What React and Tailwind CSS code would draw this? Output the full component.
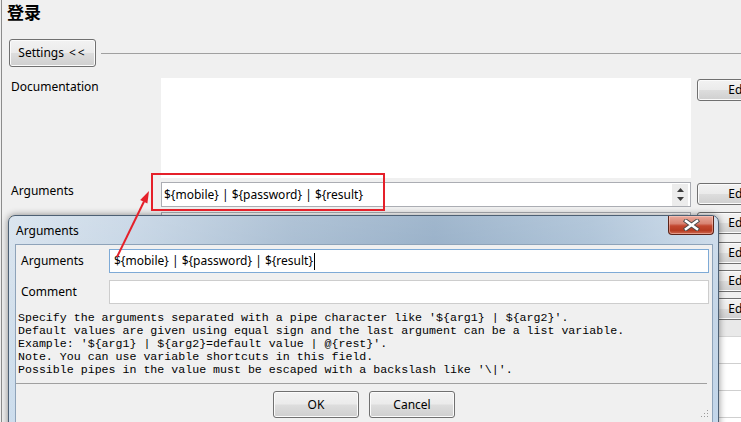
import React from "react";

function WinButton({ className = "", children }) {
  return (
    <div
      className={
        "flex shrink-0 items-center justify-center rounded-[3px] border border-[#707070] bg-[linear-gradient(to_bottom,#f2f2f2_0%,#ebebeb_48%,#dddddd_52%,#cfcfcf_100%)] shadow-[inset_0_0_0_1px_#fbfbfb] text-black " +
        className
      }
    >
      {children}
    </div>
  );
}

function Spinner() {
  return (
    <div className="ml-auto mr-[2px] flex h-[22px] w-[16px] shrink-0 flex-col items-center justify-center gap-[5px] bg-[#ececec]">
      <svg width="7" height="4" viewBox="0 0 7 4">
        <path d="M0 4 L3.5 0 L7 4Z" fill="#3c3c3c" />
      </svg>
      <svg width="7" height="4" viewBox="0 0 7 4">
        <path d="M0 0 L3.5 4 L7 0Z" fill="#3c3c3c" />
      </svg>
    </div>
  );
}

function FieldRow({ label, heightClass, children, buttonTop = "mt-px", buttonH = "h-[22px]" }) {
  return (
    <div className={"flex shrink-0 pl-[9px] " + heightClass}>
      <div className="w-[150px] shrink-0 pt-px">{label}</div>
      <div className="w-[530px] shrink-0">{children}</div>
      <WinButton className={"ml-[6px] w-[84px] " + buttonTop + " " + buttonH}>Edit</WinButton>
    </div>
  );
}

function Dialog() {
  return (
    <div className="absolute left-[8px] top-[215px] h-[222px] w-[711px] rounded-t-[7px] border border-[#4d6074] bg-[linear-gradient(to_bottom,rgba(255,255,255,0.18)_0%,rgba(255,255,255,0)_45%,rgba(190,215,240,0.35)_100%),linear-gradient(to_right,#d3e0ec_0%,#c0d1e2_18%,#9fb6cd_40%,#8ca7c2_60%,#a4bcd3_82%,#c6d7e8_100%)] shadow-[0_0_7px_rgba(0,0,0,0.45)]">
      <div className="relative flex h-[28px] items-center pl-[7px] pt-[2px] text-black">
        <span>Arguments</span>
        <div className="absolute right-[4px] top-0 flex h-[19px] w-[46px] items-center justify-center rounded-b-[4px] border border-t-0 border-[#5b2419] bg-[linear-gradient(to_bottom,#e9aa9c_0%,#d88372_42%,#c2472f_55%,#b63b21_80%,#cf6a52_100%)] shadow-[inset_0_0_0_1px_rgba(255,220,210,0.45)]">
          <svg width="17" height="12" viewBox="0 0 17 12">
            <path d="M3 2 L14 10 M14 2 L3 10" stroke="#4a4a4a" strokeWidth="4.4" strokeLinecap="square" />
            <path d="M3 2 L14 10 M14 2 L3 10" stroke="#ffffff" strokeWidth="2.6" strokeLinecap="square" />
          </svg>
        </div>
      </div>
      <div className="relative ml-[6px] mr-[5px] h-[200px] border border-[#8ea3b9] bg-[#f0f0f0]">
        <div className="mt-[4px] flex h-[24px] items-center pl-[5px] pr-[3px]">
          <div className="w-[88px] shrink-0">Arguments</div>
          <div className="flex h-[24px] flex-1 items-center border border-[#7eaad6] bg-white pl-[4px]">
            <span>{"${mobile} | ${password} | ${result}"}</span>
            <span className="ml-px h-[17px] w-px bg-black" />
          </div>
        </div>
        <div className="mt-[7px] flex h-[24px] items-center pl-[5px] pr-[3px]">
          <div className="w-[88px] shrink-0">Comment</div>
          <div className="h-[24px] flex-1 border border-[#cdcdcd] bg-white" />
        </div>
        <div className="mt-[7px] whitespace-pre pl-[2px] font-['Liberation_Mono',monospace] text-[11.62px] leading-[13px] text-black">
          <div>{"Specify the arguments separated with a pipe character like '${arg1} | ${arg2}'."}</div>
          <div>{"Default values are given using equal sign and the last argument can be a list variable."}</div>
          <div>{"Example: '${arg1} | ${arg2}=default value | @{rest}'."}</div>
          <div>{"Note. You can use variable shortcuts in this field."}</div>
          <div>{"Possible pipes in the value must be escaped with a backslash like '\\|'."}</div>
        </div>
        <div className="mr-[5px] mt-[7px] h-px bg-[#a0a0a0]" />
        <div className="mt-[7px] flex justify-center gap-[10px]">
          <WinButton className="h-[27px] w-[86px]">OK</WinButton>
          <WinButton className="h-[27px] w-[86px]">Cancel</WinButton>
        </div>
        <svg className="absolute right-[3px] top-[164px]" width="9" height="9" viewBox="0 0 9 9">
          <rect x="7" y="1" width="1" height="1" fill="#9a9a9a" />
          <rect x="4" y="4" width="1" height="1" fill="#9a9a9a" />
          <rect x="7" y="4" width="1" height="1" fill="#9a9a9a" />
          <rect x="1" y="7" width="1" height="1" fill="#9a9a9a" />
          <rect x="4" y="7" width="1" height="1" fill="#9a9a9a" />
          <rect x="7" y="7" width="1" height="1" fill="#9a9a9a" />
        </svg>
      </div>
    </div>
  );
}

export default function App() {
  return (
    <div className="relative h-[422px] w-[741px] overflow-hidden bg-[#f0f0f0] font-['Noto_Sans',sans-serif] text-[12px] leading-[16px] text-black">
      <div className="ml-px flex h-full flex-col border-l border-[#8c8c8c]">
        <div className="h-[24px] shrink-0 pl-[5px] font-['Noto_Sans_CJK_SC',sans-serif] text-[17px] font-bold leading-[24px]">
          登录
        </div>
        <div className="mt-[15px] flex shrink-0 items-center pl-[7px]">
          <WinButton className="h-[28px] w-[87px]">
            <span>Settings</span>
            <span className="ml-[5px] tracking-[2px]">&lt;&lt;</span>
          </WinButton>
          <div className="ml-[5px] h-px flex-1 bg-[#a0a0a0]" />
        </div>

        <div className="mt-[11px] flex shrink-0 flex-col">
          <FieldRow label="Documentation" heightClass="h-[100px]">
            <div className="h-[100px] bg-white" />
          </FieldRow>
          <div className="mt-[4px]">
            <FieldRow label="Arguments" heightClass="h-[25px]">
              <div className="flex h-[25px] items-center border border-[#abadb3] bg-white pl-[2px]">
                <span>{"${mobile} | ${password} | ${result}"}</span>
                <Spinner />
              </div>
            </FieldRow>
          </div>
          <div className="mt-[5px]">
            <FieldRow label="Teardown" heightClass="h-[30px]" buttonTop="mt-0">
              <div className="flex h-[25px] items-center border border-[#abadb3] bg-white pl-[2px]">
                <Spinner />
              </div>
            </FieldRow>
          </div>
          <FieldRow label="" heightClass="h-[28px]" buttonTop="mt-0">
            <div className="h-[25px] border border-[#abadb3] bg-white" />
          </FieldRow>
          <FieldRow label="" heightClass="h-[28px]" buttonTop="mt-0">
            <div className="h-[25px] border border-[#abadb3] bg-white" />
          </FieldRow>
          <FieldRow label="" heightClass="h-[22px]" buttonTop="mt-0">
            <div className="h-[21px] border border-[#abadb3] bg-white" />
          </FieldRow>
        </div>

        <div className="ml-[159px] flex flex-col">
          <div className="h-[17px] border-b border-[#d5d5d5] bg-[#e9e9e9]" />
          <div className="bg-white">
            <div className="h-[27px] border-b border-[#cfcfcf]" />
            <div className="h-[27px] border-b border-[#cfcfcf]" />
            <div className="h-[27px] border-b border-[#cfcfcf]" />
            <div className="h-[27px] border-b border-[#cfcfcf]" />
          </div>
        </div>
      </div>

      <Dialog />

      <div className="pointer-events-none absolute left-[151px] top-[173px] h-[38px] w-[234px] border-2 border-[#e5202a]" />
      <svg className="pointer-events-none absolute left-0 top-0" width="741" height="422" viewBox="0 0 741 422">
        <line x1="117" y1="257" x2="144" y2="201.5" stroke="#e5202a" strokeWidth="2" />
        <path d="M149 191 L147.4 203.6 L140.2 200.1 Z" fill="#e5202a" />
      </svg>
    </div>
  );
}
